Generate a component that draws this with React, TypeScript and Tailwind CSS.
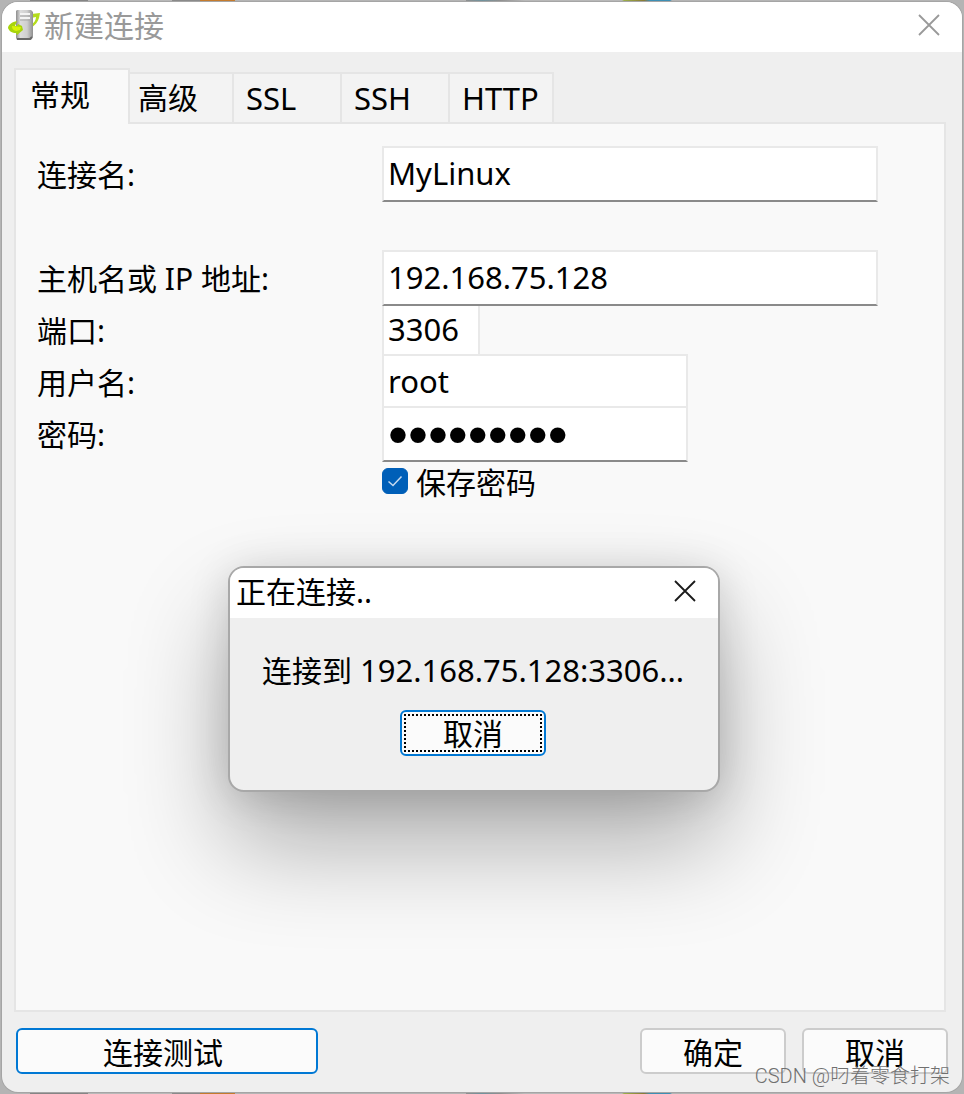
import { useState } from "react";
import type { ReactNode } from "react";

const tabs = [
  { label: "常规", className: "w-[116px]" },
  { label: "高级", className: "w-[104px] pl-2" },
  { label: "SSL", className: "w-[108px] pl-3 text-[31px]" },
  { label: "SSH", className: "w-[108px] pl-3 text-[31px]" },
  { label: "HTTP", className: "w-[104px] pl-3 text-[31px]" },
];

const inputClass =
  "h-14 border-2 border-[#e9e9e9] border-b-[#8a8a8a] bg-white pb-[2px] pl-1 text-[31px] text-black outline-none";

function ServerIcon() {
  return (
    <svg className="h-8 w-8 shrink-0" viewBox="0 0 32 32">
      <defs>
        <linearGradient id="tower" x1="0" x2="1" y1="0" y2="0">
          <stop offset="0" stopColor="#8d8d8d" />
          <stop offset="0.25" stopColor="#dcdcdc" />
          <stop offset="0.65" stopColor="#cfcfcf" />
          <stop offset="1" stopColor="#8f8f8f" />
        </linearGradient>
      </defs>
      <path d="M23 5 L32 4 L31 9 C30 13 27 16 23 19 V16 C26 14 28 11 28 8 L23 9 Z" fill="#b4dc1c" />
      <path d="M9 1 H23 L25 3 V28 L23 31 H9 L8 29 V2 Z" fill="url(#tower)" />
      <path d="M9 30 H22 L24 28" stroke="#686868" strokeWidth="2" fill="none" />
      <path d="M12 5 H22 M12 9 H22" stroke="#f4f4f4" strokeWidth="2" />
      <path d="M12 7 H22 M12 11 H22" stroke="#a6a6a6" strokeWidth="1" />
      <path d="M9 12 C4 13 0 16 0 19 C1 22 4 24 8 24 L9 26 L15 21 L14 17 L10 15 L9 17 L7 17 Z" fill="#a8d40c" />
      <path d="M4 17 L13 18 L12 21 L8 22 C5 21 4 20 4 17 Z" fill="#d8f408" />
    </svg>
  );
}

function CloseIcon() {
  return (
    <svg className="h-[22px] w-[22px]" viewBox="0 0 22 22" fill="none" stroke="currentColor" strokeWidth="1.8">
      <path d="M1 1 L21 21 M21 1 L1 21" />
    </svg>
  );
}

function Row({ id, label, children }: { id: string; label: string; children: ReactNode }) {
  return (
    <div className="flex h-[52px] items-center">
      <label htmlFor={id} className="w-[345px] shrink-0 pt-[2px]">
        {label}
      </label>
      {children}
    </div>
  );
}

export default function App() {
  const [activeTab, setActiveTab] = useState("常规");
  const [save, setSave] = useState(true);

  return (
    <div className="flex min-h-screen flex-col bg-[linear-gradient(90deg,#b4b4b4_0,#b4b4b4_30px,#858585_30px,#858585_88px,#b8b8b8_88px,#b8b8b8_172px,#8a8a8a_172px,#8a8a8a_200px,#c57b2d_200px,#c57b2d_235px,#b4b4b4_235px,#b4b4b4_466px,#8f8f8f_466px,#6f929d_482px,#8f8f8f_500px,#b8b8b8_525px,#b8b8b8_622px,#9caf4a_624px,#8b7a35_644px,#3d8fb4_650px,#3d8fb4_670px,#b4b4b4_672px,#b4b4b4_100%)] p-[2px] font-['Noto_Sans','Noto_Sans_CJK_SC',sans-serif] text-[30px] leading-9 text-black">
      <main className="relative flex flex-1 flex-col rounded-2xl bg-[#efefef] shadow-[0_0_0_1px_#a5a5a5]">
        <header className="flex h-[50px] items-center rounded-t-2xl bg-white pr-[22px] pb-1 pl-[6px] text-[#999999]">
          <ServerIcon />
          <h1 className="flex-1 pt-[2px] pl-1">新建连接</h1>
          <button type="button" aria-label="关闭">
            <CloseIcon />
          </button>
        </header>

        <nav className="flex items-end pt-4 pl-3">
          {tabs.map((tab) => (
            <button
              key={tab.label}
              type="button"
              onClick={() => setActiveTab(tab.label)}
              className={
                tab.label === activeTab
                  ? `${tab.className} relative z-10 -mb-[2px] h-14 border-2 border-b-0 border-[#e5e5e5] bg-[#f9f9f9] pb-1 pl-[14px] text-left`
                  : `${tab.className} h-[50px] border-2 border-b-0 border-l-0 border-[#e5e5e5] bg-[#f3f3f3] text-left`
              }
            >
              {tab.label}
            </button>
          ))}
        </nav>

        <form className="mr-4 ml-3 flex-1 border-2 border-[#e5e5e5] bg-[#f9f9f9] pt-6 pr-[66px] pl-[21px]">
          <Row id="name" label="连接名:">
            <input id="name" defaultValue="MyLinux" className={`${inputClass} min-w-0 flex-1`} />
          </Row>
          <div className="h-[52px]" />
          <Row id="host" label="主机名或 IP 地址:">
            <input id="host" defaultValue="192.168.75.128" className={`${inputClass} relative z-10 min-w-0 flex-1`} />
          </Row>
          <Row id="port" label="端口:">
            <input id="port" defaultValue="3306" className={`${inputClass} w-[98px]`} />
          </Row>
          <Row id="user" label="用户名:">
            <input id="user" defaultValue="root" className={`${inputClass} w-[306px]`} />
          </Row>
          <Row id="password" label="密码:">
            <input
              id="password"
              type="password"
              defaultValue="secret123"
              className="h-14 w-[306px] border-2 border-[#e9e9e9] border-b-[#8a8a8a] bg-white pl-1 font-['Liberation_Sans',sans-serif] text-[57px] leading-none outline-none"
            />
          </Row>
          <label className="ml-[345px] flex h-[42px] items-center">
            <span className="relative h-[26px] w-[26px]">
              <input
                type="checkbox"
                checked={save}
                onChange={(e) => setSave(e.target.checked)}
                className="block h-[26px] w-[26px] appearance-none rounded-md border border-[#8a8a8a] bg-white checked:border-[#005fb8] checked:bg-[#005fb8]"
              />
              {save && (
                <svg className="pointer-events-none absolute inset-0" viewBox="0 0 26 26" fill="none">
                  <path d="M6.5 13.5 L11 17.5 L19.5 8.5" stroke="#c5daf0" strokeWidth="1.5" />
                </svg>
              )}
            </span>
            <span className="pt-1 pl-2">保存密码</span>
          </label>
        </form>

        <footer className="flex gap-4 px-[14px] pt-4 pb-[18px]">
          <button type="button" className="h-[46px] w-[302px] rounded-md border-2 border-[#0078d4] bg-[#fbfbfb] pt-1 pr-2">
            连接测试
          </button>
          <button type="button" className="ml-auto h-[46px] w-[146px] rounded-md border-2 border-[#cccccc] bg-[#fbfbfb] pt-1">
            确定
          </button>
          <button type="button" className="h-[46px] w-[146px] rounded-md border-2 border-[#cccccc] bg-[#fbfbfb] pt-1">
            取消
          </button>
        </footer>

        <section
          role="dialog"
          aria-label="正在连接"
          className="absolute top-[564px] left-[226px] z-20 w-[492px] rounded-2xl border-2 border-[#a8a8a8] bg-[#efefef] shadow-[0_52px_100px_rgba(0,0,0,0.31),0_4px_42px_rgba(0,0,0,0.14)]"
        >
          <header className="flex h-[50px] items-center rounded-t-[14px] bg-white pr-[22px] pb-1 pl-[6px]">
            <h2 className="flex-1 pt-[2px]">正在连接..</h2>
            <button type="button" aria-label="关闭" className="text-[#1a1a1a]">
              <CloseIcon />
            </button>
          </header>
          <div className="flex flex-col items-center gap-[22px] pt-[34px] pr-[2px] pb-[34px]">
            <p className="h-9 text-[31px]">
              <span className="text-[30px]">连接到</span> 192.168.75.128:3306...
            </p>
            <button type="button" className="h-[46px] w-[146px] rounded-md border-2 border-[#0078d4] bg-[#fbfbfb] p-[2px]">
              <span className="block h-[38px] border-2 border-dotted border-black leading-9">取消</span>
            </button>
          </div>
        </section>

        <p className="absolute right-3 bottom-1 z-30 font-['Roboto','Noto_Sans_CJK_SC',sans-serif] text-[20px] leading-6 font-light text-[#707070]">
          CSDN @叼着零食打架
        </p>
      </main>
    </div>
  );
}
